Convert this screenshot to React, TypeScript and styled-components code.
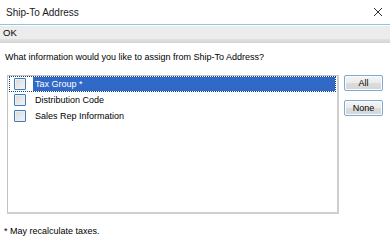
import React from 'react';
import styled, { createGlobalStyle } from 'styled-components';

const GlobalStyle = createGlobalStyle`
  html, body {
    margin: 0;
    padding: 0;
    background: #ffffff;
  }
  body {
    font-family: "Liberation Sans", Arial, sans-serif;
    color: #000000;
  }
`;

const Dialog = styled.div`
  width: 390px;
  height: 242px;
  display: flex;
  flex-direction: column;
  background: #ffffff;
  overflow: hidden;
`;

const TitleBar = styled.div`
  height: 24px;
  border-bottom: 1px solid #8fc5e2;
  display: flex;
  align-items: center;
  justify-content: space-between;
  padding: 0 7px 0 6px;
  font-size: 10px;
  color: #1a1a1a;
`;

const CloseIcon = styled.svg`
  width: 10px;
  height: 10px;
`;

const Toolbar = styled.div`
  height: 18px;
  display: flex;
  flex-direction: column;
`;

const ToolbarItems = styled.div`
  height: 13px;
  background: #ececec;
  padding-left: 3px;
  font-size: 9.5px;
  line-height: 13px;
  margin-top: 1px;
`;

const ToolbarEdge = styled.div`
  height: 4px;
  background: linear-gradient(#e2e2e2, #d4d4d4);
`;

const Body = styled.div`
  flex: 1;
  display: flex;
  flex-direction: column;
  padding: 8px 0 0 0;
`;

const Question = styled.div`
  padding-left: 5px;
  font-size: 9px;
  line-height: 12px;
  height: 12px;
`;

const Content = styled.div`
  display: flex;
  margin-top: 12px;
  padding-left: 7px;
  gap: 5px;
`;

const ListBox = styled.div`
  width: 327px;
  height: 136px;
  border: 1px solid #c2c2c2;
  border-right: 2px solid #cfcfcf;
  border-bottom: 2px solid #cfcfcf;
  padding: 0 1px;
  display: flex;
  flex-direction: column;
`;

const Row = styled.div<{ $selected?: boolean }>`
  height: 16px;
  display: flex;
  align-items: center;
  box-sizing: border-box;
  border: 1px dotted ${({ $selected }) => ($selected ? '#1d3f86' : 'transparent')};
  font-size: 9px;
`;

const CheckCell = styled.div`
  width: 23px;
  height: 100%;
  display: flex;
  align-items: center;
  padding-left: 4px;
  box-sizing: border-box;
`;

const CheckBox = styled.div`
  width: 10px;
  height: 10px;
  border: 1px solid #3d7db8;
  border-radius: 1px;
  background: linear-gradient(135deg, #d8d8d8, #f4f4f4);
  box-shadow: inset 0 0 0 1px #eeeeee;
`;

const Label = styled.div<{ $selected?: boolean }>`
  flex: 1;
  height: 100%;
  display: flex;
  align-items: center;
  padding-left: 2px;
  background: ${({ $selected }) => ($selected ? '#3169c6' : 'transparent')};
  color: ${({ $selected }) => ($selected ? '#ffffff' : '#000000')};
`;

const ButtonColumn = styled.div`
  display: flex;
  flex-direction: column;
  gap: 9px;
`;

const Button = styled.button`
  width: 39px;
  height: 16px;
  padding: 0;
  border: 1px solid #7fa9d3;
  border-radius: 2px;
  background: linear-gradient(#f5f5f5 0%, #ebebeb 50%, #dcdcdc 51%, #d6d6d6 100%);
  box-shadow: inset 0 0 0 1px #fbfbfb;
  font-family: "Liberation Sans", Arial, sans-serif;
  font-size: 9px;
  color: #000000;
  line-height: 14px;
`;

const Footnote = styled.div`
  margin-top: 12px;
  padding-left: 4px;
  font-size: 9px;
  line-height: 11px;
`;

const items = [
  { label: 'Tax Group *', selected: true },
  { label: 'Distribution Code' },
  { label: 'Sales Rep Information' },
];

export default function App(): JSX.Element {
  return (
    <>
      <GlobalStyle />
      <Dialog>
        <TitleBar>
          <span>Ship-To Address</span>
          <CloseIcon viewBox="0 0 10 10">
            <path d="M1 1 L9 9 M9 1 L1 9" stroke="#2b2b2b" strokeWidth="1" fill="none" />
          </CloseIcon>
        </TitleBar>
        <Toolbar>
          <ToolbarItems>OK</ToolbarItems>
          <ToolbarEdge />
        </Toolbar>
        <Body>
          <Question>What information would you like to assign from Ship-To Address?</Question>
          <Content>
            <ListBox>
              {items.map((item) => (
                <Row key={item.label} $selected={item.selected}>
                  <CheckCell>
                    <CheckBox />
                  </CheckCell>
                  <Label $selected={item.selected}>{item.label}</Label>
                </Row>
              ))}
            </ListBox>
            <ButtonColumn>
              <Button>All</Button>
              <Button>None</Button>
            </ButtonColumn>
          </Content>
          <Footnote>* May recalculate taxes.</Footnote>
        </Body>
      </Dialog>
    </>
  );
}
